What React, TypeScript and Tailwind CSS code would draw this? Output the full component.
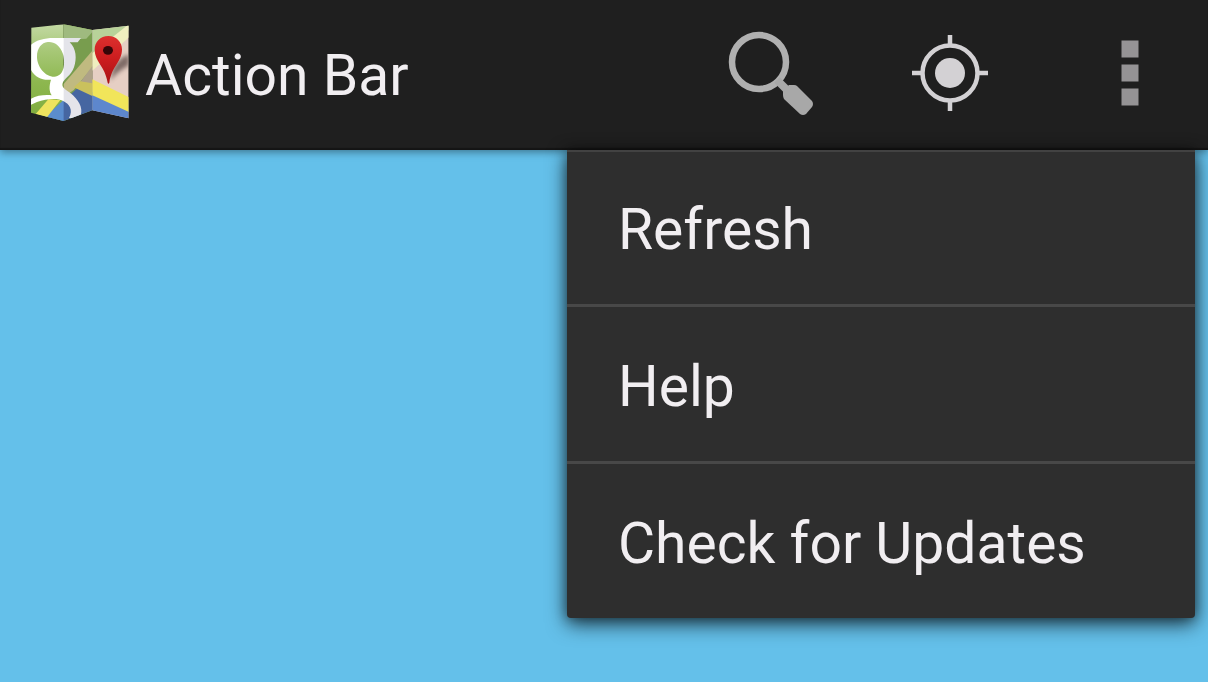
import React, { useState } from 'react';

const MENU_ITEMS = ['Refresh', 'Help', 'Check for Updates'];

// --- ICONS ---
const MapsLogo = () => (
  <svg viewBox="48 42 294 291" className="w-[98px] h-[97px] mb-1.5 shrink-0" aria-hidden="true">
    <defs>
      <clipPath id="sheet">
        <path d="M49 53 L146 43 L232 60 L341 47 V325 L232 301 L146 333 L48 308 Z" />
      </clipPath>
      <linearGradient id="leftFold" x1="0" y1="0" x2="0" y2="1">
        <stop offset="0" stopColor="#c3d9a3" />
        <stop offset="0.25" stopColor="#a9c97a" />
        <stop offset="0.6" stopColor="#8db74f" />
        <stop offset="1" stopColor="#7fab3c" />
      </linearGradient>
      <linearGradient id="pin" x1="0" y1="0" x2="0" y2="1">
        <stop offset="0" stopColor="#dc302e" />
        <stop offset="0.5" stopColor="#cb1c1e" />
        <stop offset="1" stopColor="#a81215" />
      </linearGradient>
      <filter id="soft" x="-30%" y="-30%" width="160%" height="160%">
        <feGaussianBlur stdDeviation="6" />
      </filter>
    </defs>
    <g clipPath="url(#sheet)">
      <rect x="48" y="42" width="98" height="292" fill="url(#leftFold)" />
      <rect x="146" y="42" width="86" height="292" fill="#83ae4c" />
      <path d="M146 42 H232 V66 L214 86 L146 90 Z" fill="#b0cf85" />
      <rect x="232" y="42" width="110" height="292" fill="#e6cfc4" />
      <path d="M232 42 H342 V60 L232 150 Z" fill="#b8d299" />
      {/* diagonal road */}
      <path d="M232 130 L342 42 V82 L232 182 Z" fill="#efeebf" />
      <path d="M232 122 V172 L176 240 L146 262 V222 Z" fill="#d6cf86" />
      <path d="M232 168 V228 L192 222 Z" fill="#c1b48f" />
      {/* river */}
      <path d="M100 320 L146 272 L190 232 L232 246 V334 H90 Z" fill="#4a6fac" />
      <path d="M88 322 L146 270 V334 H88 Z" fill="#5b8dcd" />
      <path d="M232 246 L342 296 V334 H232 Z" fill="#5d87cd" />
      {/* yellow road */}
      <path d="M196 214 L232 220 V258 L176 232 Z" fill="#e2d75e" />
      <path d="M232 208 L342 262 V306 L232 256 Z" fill="#f1e55a" />
      <path d="M62 312 L100 268 L136 270 L96 322 Z" fill="#eee35e" />
      {/* emblem */}
      <path
        fillRule="evenodd"
        d="M48 104 C66 88 96 82 126 84 H198 L188 97 H164 C184 116 186 146 177 172 C168 198 146 206 142 222 C140 236 158 240 174 256 C196 278 206 300 194 324 H162 C176 300 162 282 146 274 C126 262 92 268 66 276 L48 284 V266 C66 256 90 254 110 256 C102 244 102 228 108 209 C84 212 62 204 48 180 Z M66 140 C66 170 90 200 118 200 C146 198 152 166 144 132 C134 104 116 94 98 96 C80 98 66 114 66 140 Z"
        fill="#ffffff"
      />
      <path d="M146 43 L232 60 V301 L146 333 Z" fill="#303060" opacity="0.13" />
      <path d="M284 212 L294 176 C312 146 326 138 342 134 V166 C320 178 304 190 284 212 Z" fill="#5b4a46" opacity="0.75" filter="url(#soft)" />
    </g>
    <path d="M280 78 C256 78 239 96 239 118 C239 156 270 168 278 218 Q280 224 283 218 C290 168 321 156 321 118 C321 96 304 78 280 78 Z" fill="url(#pin)" />
    <ellipse cx="279" cy="121" rx="15" ry="13" fill="#350608" />
  </svg>
);

const SearchIcon = () => (
  <svg viewBox="0 0 88 88" className="w-[88px] h-[88px]" aria-hidden="true">
    <circle cx="33" cy="33" r="27" fill="none" stroke="#b0b0b0" strokeWidth="6.5" />
    <path d="M51 51 L60 60" stroke="#a8a8a8" strokeWidth="8" />
    <path d="M57 66 V62 L63 56 H68 Q70 56 71 57 L86 72 Q88 75 86 78 L80 85 Q77 87 74 85 L58 70 Q57 68 57 66 Z" fill="#a8a8a8" />
  </svg>
);

const LocationIcon = () => (
  <svg viewBox="0 0 76 76" className="w-[76px] h-[76px]" aria-hidden="true">
    <g fill="none" stroke="#d3d1d4" strokeWidth="4.5">
      <circle cx="38" cy="38" r="27.5" />
      <path d="M38 0 V12 M38 64 V76 M0 38 H12 M64 38 H76" />
    </g>
    <circle cx="38" cy="38" r="15" fill="#d3d1d4" />
  </svg>
);

const OverflowIcon = () => (
  <svg viewBox="0 0 18 66" className="w-[18px] h-[66px]" fill="#959395" aria-hidden="true">
    <rect x="0.5" y="0.5" width="17" height="17" />
    <rect x="0.5" y="24.5" width="17" height="17" />
    <rect x="0.5" y="48.5" width="17" height="17" />
  </svg>
);

// --- UI COMPONENTS ---
const ActionButton: React.FC<{
  label: string;
  onClick?: () => void;
  expanded?: boolean;
  children: React.ReactNode;
}> = ({ label, onClick, expanded, children }) => (
  <button
    type="button"
    aria-label={label}
    aria-expanded={expanded}
    onClick={onClick}
    className="w-[156px] h-full flex items-center justify-center pb-1"
  >
    {children}
  </button>
);

const OverflowMenu = () => (
  <ul className="absolute top-full right-[13px] w-[628px] rounded-b-sm bg-[#2e2e2e] divide-y-3 divide-[#484848] shadow-[inset_0_2px_0_#424242,0_6px_20px_rgba(0,0,0,0.7),0_0_12px_rgba(0,0,0,0.35)]">
    {MENU_ITEMS.map((item) => (
      <li key={item}>
        <button type="button" className="w-full h-[154px] pt-1 pl-[51px] text-left">
          {item}
        </button>
      </li>
    ))}
  </ul>
);

const App: React.FC = () => {
  const [menuOpen, setMenuOpen] = useState(true);

  return (
    <div className="min-h-screen flex flex-col bg-[#64c0ea] text-[#f1eef1] text-[57px] leading-none font-['Roboto',sans-serif]">
      <header className="relative h-[150px] flex items-center justify-between pl-[31px] bg-[#1f1f1f] shadow-[inset_0_-2px_1px_#141414,0_2px_8px_rgba(0,0,0,0.4)]">
        <div className="flex items-center gap-4">
          <MapsLogo />
          <h1>Action Bar</h1>
        </div>
        <nav className="h-full flex gap-6">
          <ActionButton label="Search">
            <SearchIcon />
          </ActionButton>
          <ActionButton label="My location">
            <LocationIcon />
          </ActionButton>
          <ActionButton label="More options" expanded={menuOpen} onClick={() => setMenuOpen(!menuOpen)}>
            <OverflowIcon />
          </ActionButton>
        </nav>
        {menuOpen && <OverflowMenu />}
      </header>
      <main className="flex-grow" />
    </div>
  );
};

export default App;
